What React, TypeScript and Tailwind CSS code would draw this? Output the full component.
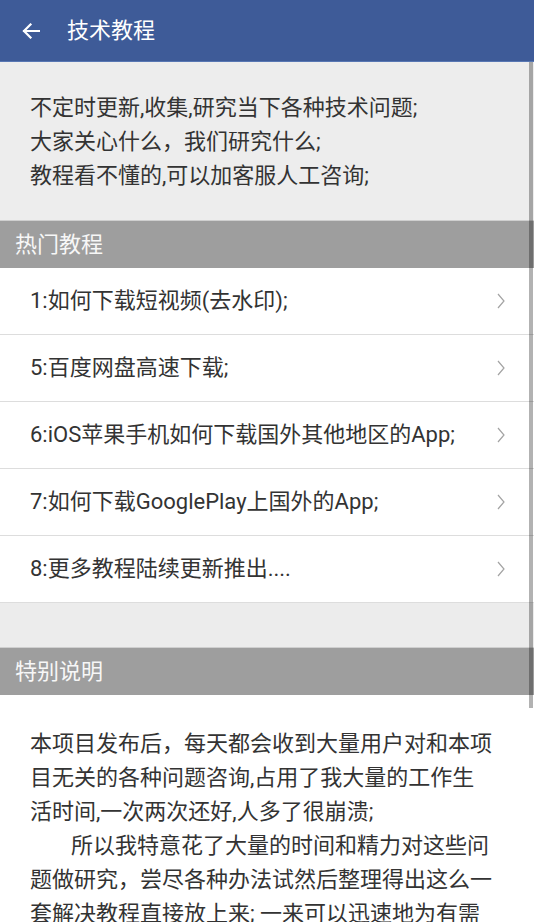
import React from 'react';

const items = [
    '1:如何下载短视频(去水印);',
    '5:百度网盘高速下载;',
    '6:iOS苹果手机如何下载国外其他地区的App;',
    '7:如何下载GooglePlay上国外的App;',
    '8:更多教程陆续更新推出....',
];

const font = { fontFamily: 'Roboto, "Noto Sans CJK SC", sans-serif' };

const SectionTitle: React.FC<{ title: string }> = ({ title }) => (
    <div className="h-[48px] border-t border-[#cfcfcf] bg-[#9e9e9e] flex items-center pl-[15px]">
        <span className="text-[22px] text-[#f7f7f7] leading-none">{title}</span>
    </div>
);

const Chevron = () => (
    <svg width="8" height="16" viewBox="0 0 8 16" className="shrink-0">
        <polyline points="1,1 7,8 1,15" fill="none" stroke="#a3a3a3" strokeWidth="1.2" />
    </svg>
);

export default function App() {
    return (
        <div className="relative w-[534px] h-[922px] overflow-hidden bg-white" style={font}>
            {/* Toolbar */}
            <div className="h-[62px] bg-[#3e5b98] border-b border-[#5877b3] flex items-center">
                <svg width="18" height="16" viewBox="0 0 18 16" className="ml-[22px]">
                    <path d="M17 8H2M8.5 1.5L2 8l6.5 6.5" fill="none" stroke="white" strokeWidth="2.2" strokeLinecap="square" />
                </svg>
                <span className="ml-[27px] text-[22px] text-white leading-none">技术教程</span>
            </div>

            {/* Intro */}
            <div className="bg-[#ededed] pt-[29px] pb-[27px] pl-[30px] text-[22px] leading-[34px] text-[#333333]">
                <div>不定时更新,收集,研究当下各种技术问题;</div>
                <div>大家关心什么，我们研究什么;</div>
                <div>教程看不懂的,可以加客服人工咨询;</div>
            </div>

            <SectionTitle title="热门教程" />

            {/* Hot tutorials */}
            <div className="bg-white">
                {items.map((item) => (
                    <div key={item} className="h-[67px] border-b border-[#dddddd] flex items-center justify-between pl-[30px] pr-[29px]">
                        <span className="text-[22px] text-[#333333] leading-none">{item}</span>
                        <Chevron />
                    </div>
                ))}
            </div>

            <div className="h-[44px] bg-[#ececec]" />

            <SectionTitle title="特别说明" />

            {/* Notes */}
            <div className="pt-[32px] pl-[30px] text-[22px] leading-[34px] text-[#333333] whitespace-nowrap">
                <div>本项目发布后，每天都会收到大量用户对和本项</div>
                <div>目无关的各种问题咨询,占用了我大量的工作生</div>
                <div>活时间,一次两次还好,人多了很崩溃;</div>
                <div>
                    <span className="inline-block w-[41px]" />
                    所以我特意花了大量的时间和精力对这些问
                </div>
                <div>题做研究，尝尽各种办法试然后整理得出这么一</div>
                <div>套解决教程直接放上来; 一来可以迅速地为有需</div>
            </div>

            {/* Scroll indicator */}
            <div className="absolute right-[1px] top-[62px] w-[4px] h-[646px] bg-black/30" />
        </div>
    );
}
